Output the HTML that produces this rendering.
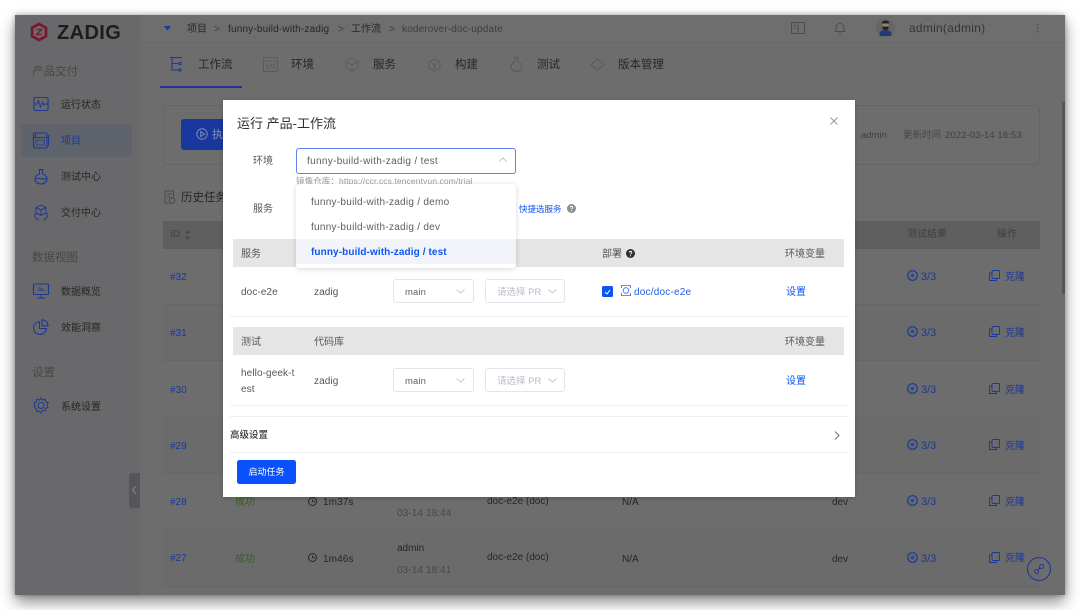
<!DOCTYPE html>
<html lang="zh"><head><meta charset="utf-8"><style>
*{box-sizing:border-box}
html,body{margin:0;padding:0;width:1080px;height:610px;overflow:hidden;background:#fff}
body{position:relative;font-family:"Liberation Sans","Noto Sans CJK SC",sans-serif;color:#2e2e2e;filter:blur(.35px)}
.a{position:absolute;white-space:nowrap;line-height:24px}
.l16{line-height:16px}.l18{line-height:18px}
svg{position:absolute;fill:none;overflow:visible}
#win{position:absolute;left:15px;top:15px;width:1050px;height:580px;background:#6d6d6d;box-shadow:0 7px 14px rgba(0,0,0,.45),0 0 5px rgba(0,0,0,.3);overflow:hidden}
.d{color:#262626}.g{color:#3f3f3f}.b{color:#1b3899}.gr{color:#35601f}
.sel{position:absolute;height:24px;border:1px solid #e3e5ee;border-radius:3px;background:#fff}
.blue{color:#0b55f5}
.line{position:absolute;height:1px;background:#edeff5}
</style></head><body>
<div id="win"></div>
<div class="a" style="left:140px;top:15px;width:925px;height:28px;background:#6e6e6e;border-bottom:1px solid #676767"></div>
<div class="a" style="left:15px;top:15px;width:125px;height:580px;background:#69696b"></div>
<div class="a" style="left:1062px;top:102px;width:3px;height:192px;background:#555"></div>

<!-- logo -->
<svg style="left:30px;top:23px" width="18" height="18" viewBox="0 0 18 18"><path d="M9 1 16 4.800v8.400L9 17 2 13.200V4.800z" stroke="#7c1530" stroke-width="2.600"/><path d="M6.500 6.500h5L6.800 11.500h5" stroke="#7c1530" stroke-width="1.300"/></svg>
<div class="a" style="left:57px;top:22px;font-size:20px;line-height:22px;font-weight:700;letter-spacing:.4px;color:#1d1d1d">ZADIG</div>

<div class="a l18" style="left:32px;top:63px;font-size:11.500px;color:#474747">产品交付</div>
<div class="a" style="left:21px;top:124px;width:111px;height:33px;border-radius:5px;background:#5f636c"></div>
<svg style="left:33px;top:96px" width="16" height="16"><rect x="1" y="1.500" width="14" height="13" rx="1.500" stroke="#1b3899" stroke-width="1.100"/><path d="M1.500 8 4 8 5.500 4.500 7.500 11 9.500 6 11 9 12 8 14.500 8" stroke="#1b3899"/></svg>
<div class="a d" style="left:61px;top:94px;font-size:10px">运行状态</div>
<svg style="left:33px;top:132px" width="16" height="17"><rect x="0.500" y="1" width="13.500" height="15" rx="1.500" stroke="#1b3899" stroke-width="1.100"/><path d="M0.500 5.500H14M15.500 3V14M2.500 1V5.500" stroke="#1b3899"/><rect x="3" y="8" width="8.500" height="5" stroke="#1b3899" stroke-width=".7"/></svg>
<div class="a b" style="left:61px;top:130px;font-size:10px">项目</div>
<svg style="left:34px;top:168px" width="14" height="17"><path d="M4.500 1.500h5M5.500 1.500V6C2.500 7 1 9 1 11a6 5 0 0 0 12 0c0-2-1.500-4-4.500-5V1.500M1.500 11c3-2.500 7 1.500 11-.5" stroke="#1b3899" stroke-width="1.100"/></svg>
<div class="a d" style="left:61px;top:166px;font-size:10px">测试中心</div>
<svg style="left:34px;top:204px" width="14" height="18"><path d="M7 1 12 3.500V9L7 11.500 2 9V3.500zM2 3.500 7 6l5-2.500M7 6v5.500M1 9v4l3.500 3.500M13 9v4l-3.500 3.500" stroke="#1b3899"/></svg>
<div class="a d" style="left:61px;top:202px;font-size:10px">交付中心</div>
<div class="a l16" style="left:32px;top:250px;font-size:11.500px;color:#474747">数据视图</div>
<svg style="left:33px;top:283px" width="16" height="16"><rect x=".5" y="1" width="15" height="10.500" rx="1" stroke="#1b3899" stroke-width="1.100"/><path d="M8 11.500V15M4 15h8M5 8V6.500M7 8V4M9 8V5M11 8V6.500" stroke="#1b3899"/></svg>
<div class="a d" style="left:61px;top:281px;font-size:10px">数据概览</div>
<svg style="left:33px;top:319px" width="16" height="16"><path d="M6.500 2.500a6.500 6.500 0 1 0 7 7H6.500zM9 .8a6 6 0 0 1 6 6H9z" stroke="#1b3899" stroke-width="1.100"/></svg>
<div class="a d" style="left:61px;top:317px;font-size:10px">效能洞察</div>
<div class="a l16" style="left:32px;top:365px;font-size:11.500px;color:#474747">设置</div>
<svg style="left:33px;top:397px" width="16" height="17"><path d="M8 1l1.500 2 2.500-.7.500 2.500 2.500.7L14 8l1 2.500-2.500.8-.5 2.500-2.500-.6L8 16l-1.500-1.800-2.500.6-.5-2.500L1 9.500 2 8 1 5.500l2.500-.7.500-2.500 2.500.7z" stroke="#1b3899"/><circle cx="8" cy="8.500" r="3" stroke="#1b3899"/></svg>
<div class="a d" style="left:61px;top:395.500px;font-size:10px">系统设置</div>
<div class="a" style="left:129px;top:473px;width:11px;height:35px;background:#55565a;border-radius:3px 0 0 3px"></div>
<svg style="left:131px;top:485px" width="7" height="10"><path d="M5 1 1.500 5 5 9" stroke="#858585"/></svg>

<!-- top bar -->
<svg style="left:164px;top:26px" width="7" height="5"><path d="M0 0h7L3.500 4.500z" fill="#1b3899"/></svg>
<div class="a d" style="left:187px;top:18px;font-size:10px">项目</div>
<div class="a g" style="left:214px;top:18px;font-size:10px">&gt;</div>
<div class="a d" style="left:228px;top:18px;font-size:10px;letter-spacing:.18px">funny-build-with-zadig</div>
<div class="a g" style="left:338px;top:18px;font-size:10px">&gt;</div>
<div class="a d" style="left:351px;top:18px;font-size:10px">工作流</div>
<div class="a g" style="left:389px;top:18px;font-size:10px">&gt;</div>
<div class="a g" style="left:402px;top:18px;font-size:10px;letter-spacing:.15px">koderover-doc-update</div>
<svg style="left:791px;top:22px" width="14" height="12"><rect x=".5" y=".5" width="13" height="11" rx="1" stroke="#4e4e4e"/><path d="M7 .5v11M2.500 3.500h2.500M2.500 6h2.500" stroke="#4e4e4e"/></svg>
<svg style="left:834px;top:21px" width="12" height="14"><path d="M1 10.500c1-1 1.300-2 1.300-4.500a3.700 3.700 0 0 1 7.400 0c0 2.500.3 3.500 1.300 4.500zM5 12.500h2" stroke="#4e4e4e"/></svg>
<div class="a" style="left:876px;top:19px;width:19px;height:18px;border-radius:50%;background:#656565"></div>
<svg style="left:879px;top:19px" width="13" height="17"><path d="M0.500 17v-2.500C0.500 12 4 11 6.500 11s6 1 6 3.500V17z" fill="#233a75"/><rect x="3.500" y="2" width="6" height="8" rx="2.500" fill="#a57f66"/><path d="M3 3.500C3 1 10 1 10 3.500v1H3z" fill="#222"/><path d="M3.500 7.500h6v2c0 2-6 2-6 0z" fill="#222"/></svg>
<div class="a l16" style="left:909px;top:20px;font-size:12px;color:#363636;letter-spacing:.25px">admin(admin)</div>
<svg style="left:1036px;top:24px" width="3" height="9"><path d="M1.500 0v1.500M1.500 3.500V5M1.500 7v1.500" stroke="#4a4a4a" stroke-width="1.500"/></svg>

<!-- tabs -->
<svg style="left:169px;top:56px" width="14" height="16"><path d="M1 1.500h12M3 1.500V14H10M3 7.500H10" stroke="#1b3899"/><circle cx="11" cy="7.500" r="1.300" stroke="#1b3899"/><circle cx="11" cy="14" r="1.300" stroke="#1b3899"/></svg>
<div class="a d l16" style="left:198px;top:57px;font-size:11.500px">工作流</div>
<div class="a" style="left:160px;top:86px;width:82px;height:1.500px;background:#1b3899"></div>
<svg style="left:263px;top:57px" width="15" height="15"><rect x=".5" y=".5" width="14" height="14" rx="1" stroke="#5a5a5a"/><path d="M.5 4h14M5 7 3.500 9.500 5 12M10 7l1.500 2.500L10 12M8.500 7l-2 5" stroke="#5a5a5a" stroke-width=".8"/></svg>
<div class="a d l16" style="left:291px;top:57px;font-size:11.500px">环境</div>
<svg style="left:345px;top:57px" width="14" height="15"><path d="M7 1 13 4.500v6L7 14 1 10.500v-6zM1 4.500 7 8l6-3.500M7 8v6" stroke="#5a5a5a"/></svg>
<div class="a d l16" style="left:373px;top:57px;font-size:11.500px">服务</div>
<svg style="left:428px;top:58px" width="13" height="14"><path d="M6.500 1 12 4v6l-5.500 3L1 10V4zM4 5l2.500 2.500L9 5M6.500 7.500V11" stroke="#5a5a5a"/></svg>
<div class="a d l16" style="left:455px;top:57px;font-size:11.500px">构建</div>
<svg style="left:510px;top:56px" width="13" height="16"><path d="M4 1.500h5M5 1.500V6C2.500 7 1 8.500 1 10.500a5.500 5 0 0 0 11 0C12 8.500 10.500 7 8 6V1.500" stroke="#5a5a5a"/></svg>
<div class="a d l16" style="left:537px;top:57px;font-size:11.500px">测试</div>
<svg style="left:590px;top:58px" width="15" height="13"><path d="M7.500 1 14 6.500 7.500 12 1 6.500z" stroke="#5a5a5a"/></svg>
<div class="a d l16" style="left:618px;top:57px;font-size:11.500px">版本管理</div>

<!-- panel behind -->
<div class="a" style="left:163px;top:105px;width:877px;height:60px;border:1px solid #656565;border-radius:4px"></div>
<div class="a" style="left:181px;top:119px;width:50px;height:31px;background:#18389e;border-radius:3px"></div>
<svg style="left:196px;top:128px" width="12" height="12"><circle cx="6" cy="6" r="5.200" stroke="#7f8bb8"/><path d="M4.700 3.500 8.500 6 4.700 8.500z" stroke="#7f8bb8"/></svg>
<div class="a l16" style="left:212px;top:127px;font-size:11px;color:#8790b5">执行</div>
<div class="a g l18" style="left:861px;top:127px;font-size:9.500px">admin</div>
<div class="a l18" style="left:903px;top:127px;font-size:9.500px;color:#474747">更新时间</div>
<div class="a g l18" style="left:945px;top:127px;font-size:9.500px;letter-spacing:.1px">2022-03-14 18:53</div>
<svg style="left:164px;top:190px" width="11" height="14"><path d="M9.500 7V1H1v12h4M3 4h5M3 7h3" stroke="#494949"/><circle cx="8" cy="10.500" r="2.700" stroke="#494949"/></svg>
<div class="a d l18" style="left:181px;top:189px;font-size:11.500px">历史任务</div>
<div class="a" style="left:163px;top:221px;width:877px;height:28px;background:#5f5f5f"></div>
<div class="a g l18" style="left:170px;top:226px;font-size:10px">ID</div>
<svg style="left:184px;top:230px" width="7" height="10"><path d="M3.500 0 6.500 3.500H.5zM3.500 10 .5 6.500h6z" fill="#4b4b4b"/></svg>
<div class="a g l18" style="left:907px;top:226px;font-size:10px">测试结果</div>
<div class="a g l18" style="left:997px;top:226px;font-size:10px">操作</div>

<!-- rows -->
<div class="a" style="left:163px;top:305px;width:877px;height:56px;background:#6b6b6b"></div>
<div class="a" style="left:163px;top:418px;width:877px;height:56px;background:#6b6b6b"></div>
<div class="a" style="left:163px;top:530px;width:877px;height:56px;background:#6b6b6b"></div>
<div class="a" style="left:163px;top:304px;width:877px;height:1px;background:#666"></div>
<div class="a" style="left:163px;top:360px;width:877px;height:1px;background:#666"></div>
<div class="a" style="left:163px;top:417px;width:877px;height:1px;background:#666"></div>
<div class="a" style="left:163px;top:473px;width:877px;height:1px;background:#666"></div>
<div class="a" style="left:163px;top:529px;width:877px;height:1px;background:#666"></div>
<div class="a" style="left:163px;top:586px;width:877px;height:1px;background:#666"></div>

<div class="a b" style="left:170px;top:266px;font-size:10px">#32</div>
<div class="a b" style="left:170px;top:322px;font-size:10px">#31</div>
<div class="a b" style="left:170px;top:379px;font-size:10px">#30</div>
<div class="a b" style="left:170px;top:435px;font-size:10px">#29</div>
<div class="a b" style="left:170px;top:491px;font-size:10px">#28</div>
<div class="a b" style="left:170px;top:547px;font-size:10px">#27</div>

<div class="a gr" style="left:235px;top:491px;font-size:10px">成功</div>
<div class="a gr" style="left:235px;top:547.500px;font-size:10px">成功</div>
<svg style="left:308px;top:497px" width="9" height="9"><circle cx="4.500" cy="4.500" r="4" stroke="#262626"/><path d="M4.500 2.200v2.500H7" stroke="#262626" stroke-width=".8"/></svg>
<svg style="left:308px;top:553px" width="9" height="9"><circle cx="4.500" cy="4.500" r="4" stroke="#262626"/><path d="M4.500 2.200v2.500H7" stroke="#262626" stroke-width=".8"/></svg>
<div class="a d" style="left:323px;top:491px;font-size:10px;letter-spacing:.1px">1m37s</div>
<div class="a d" style="left:323px;top:547.500px;font-size:10px;letter-spacing:.1px">1m46s</div>
<div class="a g" style="left:397px;top:502px;font-size:10px;color:#484848;letter-spacing:.1px">03-14 18:44</div>
<div class="a d" style="left:397px;top:537px;font-size:10px">admin</div>
<div class="a g" style="left:397px;top:559px;font-size:10px;color:#484848;letter-spacing:.1px">03-14 18:41</div>
<div class="a d" style="left:487px;top:490px;font-size:10px">doc-e2e (doc)</div>
<div class="a d" style="left:487px;top:546px;font-size:10px">doc-e2e (doc)</div>
<div class="a d" style="left:622px;top:491px;font-size:10px">N/A</div>
<div class="a d" style="left:622px;top:547.500px;font-size:10px">N/A</div>
<div class="a d" style="left:832px;top:491px;font-size:10px">dev</div>
<div class="a d" style="left:832px;top:547.500px;font-size:10px">dev</div>

<!-- test result & clone per row -->
<svg width="0" height="0" style="left:0;top:0"><defs><g id="r"><circle cx="5.500" cy="5.500" r="4.800" stroke="#1b3899" stroke-width="1.200"/><circle cx="5.500" cy="5.500" r="2" fill="#2f4994"/></g><g id="c"><rect x="3" y=".5" width="7.500" height="8" rx="1" stroke="#1b3899" stroke-width=".9"/><path d="M3 3H.5v7.500H7.500V8.500" stroke="#1b3899" stroke-width=".9"/></g></defs></svg>
<svg style="left:907px;top:270px" width="11" height="11"><use href="#r"/></svg><div class="a b l18" style="left:921px;top:268px;font-size:11px">3/3</div><svg style="left:989px;top:270px" width="11" height="11"><use href="#c"/></svg><div class="a b" style="left:1005px;top:266px;font-size:10px">克隆</div>
<svg style="left:907px;top:326px" width="11" height="11"><use href="#r"/></svg><div class="a b l18" style="left:921px;top:324px;font-size:11px">3/3</div><svg style="left:989px;top:326px" width="11" height="11"><use href="#c"/></svg><div class="a b" style="left:1005px;top:322px;font-size:10px">克隆</div>
<svg style="left:907px;top:383px" width="11" height="11"><use href="#r"/></svg><div class="a b l18" style="left:921px;top:381px;font-size:11px">3/3</div><svg style="left:989px;top:383px" width="11" height="11"><use href="#c"/></svg><div class="a b" style="left:1005px;top:379px;font-size:10px">克隆</div>
<svg style="left:907px;top:439px" width="11" height="11"><use href="#r"/></svg><div class="a b l18" style="left:921px;top:437px;font-size:11px">3/3</div><svg style="left:989px;top:439px" width="11" height="11"><use href="#c"/></svg><div class="a b" style="left:1005px;top:435px;font-size:10px">克隆</div>
<svg style="left:907px;top:495px" width="11" height="11"><use href="#r"/></svg><div class="a b l18" style="left:921px;top:493px;font-size:11px">3/3</div><svg style="left:989px;top:495px" width="11" height="11"><use href="#c"/></svg><div class="a b" style="left:1005px;top:491px;font-size:10px">克隆</div>
<svg style="left:907px;top:552px" width="11" height="11"><use href="#r"/></svg><div class="a b l18" style="left:921px;top:550px;font-size:11px">3/3</div><svg style="left:989px;top:552px" width="11" height="11"><use href="#c"/></svg><div class="a b" style="left:1005px;top:547px;font-size:10px">克隆</div>
<svg style="left:1027px;top:557px" width="24" height="24"><circle cx="12" cy="12" r="11.500" stroke="#1b3899"/><circle cx="9.500" cy="14.500" r="2" stroke="#1b3899"/><circle cx="14.500" cy="9.500" r="2" stroke="#1b3899"/><path d="M11 13l2-2" stroke="#1b3899"/></svg>

<!-- modal -->
<div class="a" style="left:222.500px;top:100px;width:632px;height:397px;background:#fff;box-shadow:0 1px 4px rgba(0,0,0,.2)"></div>
<div class="a" style="left:237px;top:111.500px;font-size:13px;color:#303133">运行 产品-工作流</div>
<svg style="left:830px;top:117px" width="8" height="8"><path d="M.5.5l7 7M7.500.5l-7 7" stroke="#9a9a9a"/></svg>
<div class="a" style="left:253px;top:150px;font-size:10px;color:#55575c">环境</div>
<div class="a" style="left:295.500px;top:147.500px;width:220.500px;height:26px;border:1px solid #5b82ee;border-radius:3px"></div>
<div class="a" style="left:307px;top:150px;font-size:10px;color:#5b5d62;letter-spacing:.32px">funny-build-with-zadig / test</div>
<svg style="left:499px;top:157px" width="8" height="5"><path d="M.5 4.500 4 1l3.500 3.500" stroke="#c3c5cb"/></svg>
<div class="a l16" style="left:296px;top:173px;font-size:8.500px;color:#9a9ca2;letter-spacing:.1px">镜像仓库：https://ccr.ccs.tencentyun.com/trial</div>
<div class="a" style="left:253px;top:198px;font-size:10px;color:#55575c">服务</div>
<div class="a l16" style="left:519px;top:201px;font-size:8.500px;color:#0b55f5">快捷选服务</div>
<svg style="left:567px;top:204px" width="9" height="9"><circle cx="4.500" cy="4.500" r="4.500" fill="#8b8d92"/><path d="M3.200 3.500C3.300 2 5.800 2 5.800 3.500 5.800 4.500 4.500 4.400 4.500 5.500M4.500 6.300v.9" stroke="#fff" stroke-width=".9"/></svg>

<div class="a" style="left:233px;top:239px;width:611px;height:28px;background:#e5e5e5"></div>
<div class="a" style="left:241px;top:243px;font-size:10px;color:#55575c">服务</div>
<div class="a" style="left:602px;top:243px;font-size:10px;color:#55575c">部署</div>
<svg style="left:626px;top:249px" width="9" height="9"><circle cx="4.500" cy="4.500" r="4.500" fill="#2f2f2f"/><path d="M3.200 3.500C3.300 2 5.800 2 5.800 3.500 5.800 4.500 4.500 4.400 4.500 5.500M4.500 6.300v.9" stroke="#fff" stroke-width=".9"/></svg>
<div class="a" style="left:785px;top:243px;font-size:10px;color:#55575c">环境变量</div>

<div class="a" style="left:241px;top:281px;font-size:10px;color:#55575c;letter-spacing:.1px">doc-e2e</div>
<div class="a" style="left:314px;top:281px;font-size:10px;color:#55575c;letter-spacing:.1px">zadig</div>
<div class="sel" style="left:393px;top:279px;width:81px"></div>
<div class="a" style="left:405px;top:281px;font-size:9.500px;color:#606266;letter-spacing:.1px">main</div>
<svg style="left:456px;top:289px" width="9" height="5"><path d="M.5.500 4.500 4 8.500.5" stroke="#c5c7cd" stroke-width=".9"/></svg>
<div class="sel" style="left:485px;top:279px;width:80px"></div>
<div class="a" style="left:497px;top:281px;font-size:9.500px;color:#b9bbc1">请选择 PR</div>
<svg style="left:548px;top:289px" width="9" height="5"><path d="M.5.500 4.500 4 8.500.5" stroke="#c5c7cd" stroke-width=".9"/></svg>
<div class="a" style="left:602px;top:286px;width:10.500px;height:10.500px;background:#0b55f5;border-radius:1.500px"></div>
<svg style="left:604px;top:288.500px" width="7" height="6"><path d="M1 3 3 5 6 1" stroke="#fff" stroke-width="1"/></svg>
<svg style="left:621px;top:285px" width="10" height="11"><path d="M.5 3V.5H9.500V3M.5 8v2.500H9.500V8" stroke="#2f68ef" stroke-width=".8"/><circle cx="5" cy="5.500" r="2.800" stroke="#2f68ef" stroke-width=".8"/></svg>
<div class="a" style="left:634px;top:281px;font-size:10px;color:#1e5cf0;letter-spacing:.2px">doc/doc-e2e</div>
<div class="a blue" style="left:786px;top:281px;font-size:10px">设置</div>
<div class="line" style="left:230px;top:316px;width:618px"></div>

<div class="a" style="left:233px;top:327px;width:611px;height:28px;background:#e5e5e5"></div>
<div class="a" style="left:241px;top:331px;font-size:10px;color:#55575c">测试</div>
<div class="a" style="left:314px;top:331px;font-size:10px;color:#55575c">代码库</div>
<div class="a" style="left:785px;top:331px;font-size:10px;color:#55575c">环境变量</div>
<div class="a" style="left:241px;top:362px;font-size:10px;color:#55575c;letter-spacing:.1px">hello-geek-t</div>
<div class="a" style="left:241px;top:378px;font-size:10px;color:#55575c;letter-spacing:.1px">est</div>
<div class="a" style="left:314px;top:370px;font-size:10px;color:#55575c;letter-spacing:.1px">zadig</div>
<div class="sel" style="left:393px;top:368px;width:81px"></div>
<div class="a" style="left:405px;top:370px;font-size:9.500px;color:#606266;letter-spacing:.1px">main</div>
<svg style="left:456px;top:378px" width="9" height="5"><path d="M.5.500 4.500 4 8.500.5" stroke="#c5c7cd" stroke-width=".9"/></svg>
<div class="sel" style="left:485px;top:368px;width:80px"></div>
<div class="a" style="left:497px;top:370px;font-size:9.500px;color:#b9bbc1">请选择 PR</div>
<svg style="left:548px;top:378px" width="9" height="5"><path d="M.5.500 4.500 4 8.500.5" stroke="#c5c7cd" stroke-width=".9"/></svg>
<div class="a blue" style="left:786px;top:370px;font-size:10px">设置</div>
<div class="line" style="left:230px;top:405px;width:618px"></div>
<div class="line" style="left:230px;top:416px;width:618px"></div>
<div class="a l18" style="left:230px;top:427px;font-size:9.500px;font-weight:500;color:#3a3a3a">高级设置</div>
<svg style="left:834px;top:431px" width="6" height="9"><path d="M1 .5 5 4.500 1 8.500" stroke="#6b6d72"/></svg>
<div class="line" style="left:230px;top:452px;width:618px"></div>
<div class="a" style="left:237px;top:460px;width:59px;height:24px;background:#0a51fb;border-radius:2.500px;color:#fff;font-size:9px;line-height:24px;text-align:center">启动任务</div>

<!-- dropdown -->
<div class="a" style="left:296px;top:184px;width:220px;height:84px;background:#fff;border-radius:3px;box-shadow:0 1px 6px rgba(0,0,0,.16)"></div>
<div class="a" style="left:296px;top:239px;width:220px;height:24.500px;background:#f2f4f9"></div>
<div class="a" style="left:311px;top:191px;font-size:10px;color:#5b5d62;letter-spacing:.27px">funny-build-with-zadig / demo</div>
<div class="a" style="left:311px;top:216px;font-size:10px;color:#5b5d62;letter-spacing:.27px">funny-build-with-zadig / dev</div>
<div class="a" style="left:311px;top:241px;font-size:10px;font-weight:700;color:#0b55f5;letter-spacing:.1px">funny-build-with-zadig / test</div>
</body></html>
